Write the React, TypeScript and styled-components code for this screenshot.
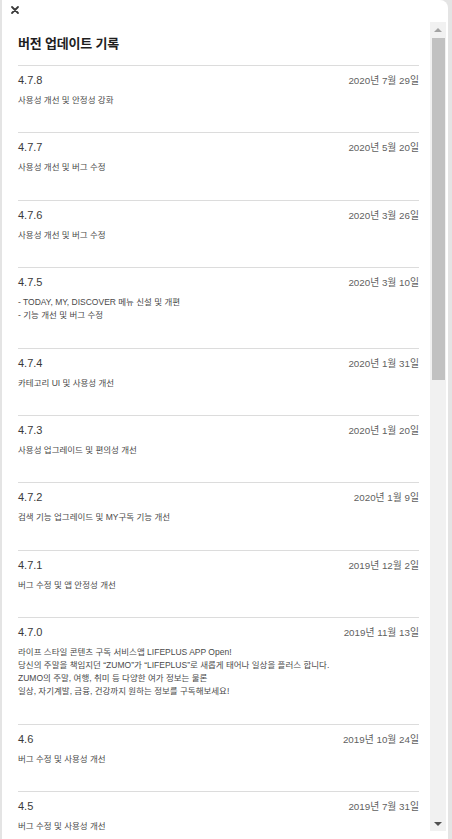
import styled, { createGlobalStyle } from 'styled-components';

const GlobalStyle = createGlobalStyle`
    html, body {
        margin: 0;
        padding: 0;
        height: 100%;
        background: #e4e4e4;
    }
    body {
        font-family: 'Liberation Sans', 'Noto Sans CJK KR', sans-serif;
        overflow: hidden;
    }
`;

const Panel = styled.div`
    margin: 0 4px 0 2px;
    height: 839px;
    background: #fff;
    border-radius: 0 8px 0 0;
    display: flex;
    flex-direction: column;
`;

const TopBar = styled.div`
    height: 22px;
    display: flex;
    align-items: center;
    padding-left: 8px;
    flex-shrink: 0;
`;

const CloseButton = styled.button`
    border: none;
    background: none;
    padding: 0;
    width: 10px;
    height: 10px;
    display: flex;
    cursor: pointer;
    margin-top: -2px;
`;

const Body = styled.div`
    display: flex;
    height: 809px;
`;

const Scroller = styled.div`
    flex: 1;
    overflow: hidden;
    padding: 0 11px 0 16px;
`;

const ScrollBar = styled.div`
    width: 16px;
    margin-right: 2px;
    background: #f1f1f1;
    display: flex;
    flex-direction: column;
`;

const ArrowButton = styled.div`
    height: 15px;
    display: flex;
    align-items: center;
    justify-content: center;
    flex-shrink: 0;
`;

const Track = styled.div`
    flex: 1;
    padding: 1px 1px 0 2px;
`;

const Thumb = styled.div`
    height: 342px;
    background: #c1c1c1;
`;

const Title = styled.h1`
    margin: 12px 0 11px;
    font-size: 13px;
    line-height: 20px;
    font-weight: bold;
    color: #1e1e1e;
    letter-spacing: -0.2px;
`;

const Entry = styled.div`
    border-top: 1px solid #dcdcdc;
    padding: 6px 0 25.4px;
    display: flex;
    flex-direction: column;
    gap: 6px;
`;

const EntryHead = styled.div`
    display: flex;
    justify-content: space-between;
    align-items: center;
    height: 16px;
`;

const Version = styled.span`
    font-size: 11px;
    color: #3a3a3a;
`;

const Date = styled.span`
    font-size: 9.8px;
    color: #5f5f5f;
`;

const Notes = styled.div`
    font-size: 8.5px;
    line-height: 13px;
    color: #4a4a4a;
    white-space: pre-line;
`;

type Release = { version: string; date: string; notes: string };

const releases: Release[] = [
    { version: '4.7.8', date: '2020년 7월 29일', notes: '사용성 개선 및 안정성 강화' },
    { version: '4.7.7', date: '2020년 5월 20일', notes: '사용성 개선 및 버그 수정' },
    { version: '4.7.6', date: '2020년 3월 26일', notes: '사용성 개선 및 버그 수정' },
    {
        version: '4.7.5',
        date: '2020년 3월 10일',
        notes: '- TODAY, MY, DISCOVER 메뉴 신설 및 개편\n- 기능 개선 및 버그 수정',
    },
    { version: '4.7.4', date: '2020년 1월 31일', notes: '카테고리 UI 및 사용성 개선' },
    { version: '4.7.3', date: '2020년 1월 20일', notes: '사용성 업그레이드 및 편의성 개선' },
    { version: '4.7.2', date: '2020년 1월 9일', notes: '검색 기능 업그레이드 및 MY구독 기능 개선' },
    { version: '4.7.1', date: '2019년 12월 2일', notes: '버그 수정 및 앱 안정성 개선' },
    {
        version: '4.7.0',
        date: '2019년 11월 13일',
        notes:
            '라이프 스타일 콘텐츠 구독 서비스앱 LIFEPLUS APP Open!\n당신의 주말을 책임지던 “ZUMO”가 “LIFEPLUS”로 새롭게 태어나 일상을 플러스 합니다.\nZUMO의 주말, 여행, 취미 등 다양한 여가 정보는 물론\n일상, 자기계발, 금융, 건강까지 원하는 정보를 구독해보세요!',
    },
    { version: '4.6', date: '2019년 10월 24일', notes: '버그 수정 및 사용성 개선' },
    { version: '4.5', date: '2019년 7월 31일', notes: '버그 수정 및 사용성 개선' },
];

const App = () => {
    return (
        <>
            <GlobalStyle />
            <Panel>
                <TopBar>
                    <CloseButton aria-label="닫기">
                        <svg width="10" height="10" viewBox="0 0 10 10">
                            <path d="M2 2 L8 8 M8 2 L2 8" stroke="#3a3a3a" strokeWidth="1.8" strokeLinecap="round" />
                        </svg>
                    </CloseButton>
                </TopBar>
                <Body>
                    <Scroller>
                        <Title>버전 업데이트 기록</Title>
                        {releases.map((r) => (
                            <Entry key={r.version}>
                                <EntryHead>
                                    <Version>{r.version}</Version>
                                    <Date>{r.date}</Date>
                                </EntryHead>
                                <Notes>{r.notes}</Notes>
                            </Entry>
                        ))}
                    </Scroller>
                    <ScrollBar>
                        <ArrowButton>
                            <svg width="8" height="4" viewBox="0 0 8 4">
                                <path d="M0 4 L4 0 L8 4 Z" fill="#a3a3a3" />
                            </svg>
                        </ArrowButton>
                        <Track>
                            <Thumb />
                        </Track>
                        <ArrowButton>
                            <svg width="8" height="4" viewBox="0 0 8 4">
                                <path d="M0 0 L4 4 L8 0 Z" fill="#505050" />
                            </svg>
                        </ArrowButton>
                    </ScrollBar>
                </Body>
            </Panel>
        </>
    );
};

export default App;
